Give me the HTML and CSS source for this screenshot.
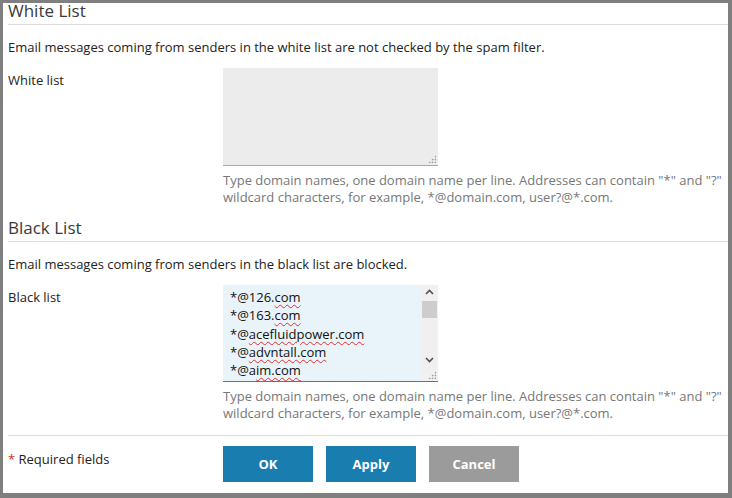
FILE: index.html
```html
<!DOCTYPE html>
<html lang="en">
<head>
<meta charset="utf-8">
<title>Spam filter lists</title>
<link rel="stylesheet" href="styles.css">
</head>
<body>
<div class="frame">
  <div class="content">
    <h2 class="section-title">White List</h2>
    <p class="desc">Email messages coming from senders in the white list are not checked by the spam filter.</p>
    <div class="row">
      <div class="label">White list</div>
      <div class="field">
        <div class="textarea textarea-empty">
          <span class="grip"></span>
        </div>
        <div class="help">Type domain names, one domain name per line. Addresses can contain "*" and "?" wildcard characters, for example, *@domain.com, user?@*.com.</div>
      </div>
    </div>

    <h2 class="section-title section-title-2">Black List</h2>
    <p class="desc">Email messages coming from senders in the black list are blocked.</p>
    <div class="row">
      <div class="label">Black list</div>
      <div class="field">
        <div class="textarea textarea-focus">
          <div class="lines">
            <div>*@126.<span class="sp">com</span></div>
            <div>*@163.<span class="sp">com</span></div>
            <div>*@<span class="sp">acefluidpower.com</span></div>
            <div>*@<span class="sp">advntall.com</span></div>
            <div>*@a<span class="sp">im.com</span></div>
          </div>
          <div class="scrollbar">
            <svg class="arrow" width="15" height="14" viewBox="0 0 15 14"><path d="M4 9 L7.5 5.5 L11 9" fill="none" stroke="#505050" stroke-width="1.6"/></svg>
            <div class="track"><div class="thumb"></div></div>
            <svg class="arrow" width="15" height="14" viewBox="0 0 15 14"><path d="M4 5 L7.5 8.5 L11 5" fill="none" stroke="#505050" stroke-width="1.6"/></svg>
            <div class="corner"></div>
          </div>
          <span class="grip"></span>
        </div>
        <div class="help">Type domain names, one domain name per line. Addresses can contain "*" and "?" wildcard characters, for example, *@domain.com, user?@*.com.</div>
      </div>
    </div>

    <div class="footer">
      <div class="label required"><span class="star">*</span> Required fields</div>
      <div class="buttons">
        <button class="btn btn-primary">OK</button>
        <button class="btn btn-primary">Apply</button>
        <button class="btn btn-cancel">Cancel</button>
      </div>
    </div>
  </div>
</div>
</body>
</html>
```
FILE: styles.css
```css
html, body {
  margin: 0;
  padding: 0;
  background: #7f7f7f;
}
body {
  width: 732px;
  height: 498px;
  overflow: hidden;
  font-family: "Open Sans", "Noto Sans", sans-serif;
  font-size: 13px;
  color: #222;
}
.frame {
  box-sizing: border-box;
  width: 732px;
  height: 498px;
  border-style: solid;
  border-color: #7f7f7f;
  border-width: 3px 4px 5px 3px;
  background: #fff;
}
.content {
  padding-left: 5px;
}
.section-title {
  margin: 0;
  font-size: 17px;
  font-weight: normal;
  line-height: 16px;
  padding-bottom: 5px;
  color: #3a3a3a;
  border-bottom: 1px solid #dcdcdc;
}
.section-title-2 {
  margin-top: 14px;
}
.desc {
  margin: 13px 0 0 0;
  line-height: 18px;
}
.row {
  display: flex;
  margin-top: 12px;
}
.label {
  width: 215px;
  flex: none;
  padding-top: 3px;
  line-height: 18px;
}
.field {
  flex: 1;
}
.textarea {
  position: relative;
  box-sizing: border-box;
  width: 215px;
  height: 98px;
  background: #ececec;
  border-bottom: 1px solid #a9a9a9;
}
.textarea-focus {
  height: 97px;
  background: #e9f3fa;
  border-bottom: 1px solid #2e8a98;
  display: flex;
}
.lines {
  flex: 1;
  padding: 3px 0 0 7px;
  line-height: 18.3px;
  color: #111;
  overflow: hidden;
}
.sp {
  text-decoration: underline wavy #e03030;
  text-decoration-thickness: 1px;
  text-underline-offset: 2px;
}
.scrollbar {
  width: 15px;
  flex: none;
  display: flex;
  flex-direction: column;
  background: #f0f0f0;
  margin-right: 1px;
}
.arrow {
  display: block;
  flex: none;
}
.track {
  flex: 1;
  display: flex;
  flex-direction: column;
}
.thumb {
  height: 17px;
  background: #cdcdcd;
  margin-top: 2px;
}
.corner {
  height: 14px;
  flex: none;
}
.grip {
  position: absolute;
  right: 2px;
  bottom: 2px;
  width: 8px;
  height: 8px;
  background:
    radial-gradient(circle, #999 0.8px, transparent 1.1px) 0 0 / 3px 3px;
  clip-path: polygon(100% 0, 100% 100%, 0 100%);
}
.help {
  margin-top: 6px;
  line-height: 17px;
  color: #777;
  width: 500px;
}
.footer {
  display: flex;
  margin-top: 13px;
  border-top: 1px solid #dcdcdc;
  padding-top: 10px;
}
.required {
  padding-top: 4px;
  color: #222;
}
.star {
  color: #c0392b;
}
.buttons {
  display: flex;
  gap: 13px;
}
.btn {
  width: 90px;
  height: 36px;
  border: none;
  margin: 0;
  padding: 0;
  font-family: "Open Sans", "Noto Sans", sans-serif;
  font-size: 13px;
  font-weight: bold;
  color: #fff;
}
.btn-primary {
  background: #1a7db0;
}
.btn-cancel {
  background: #9b9b9b;
}
```
